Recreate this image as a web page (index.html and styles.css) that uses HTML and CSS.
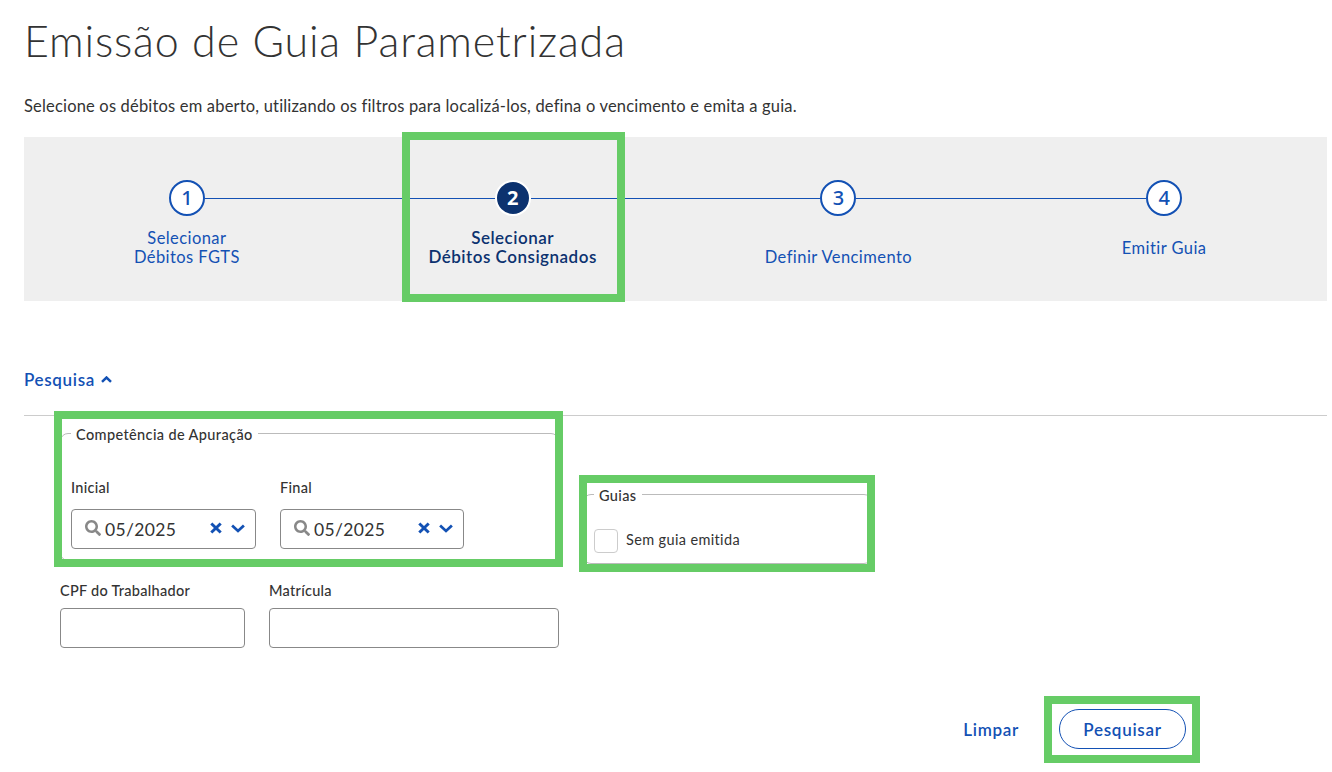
FILE: index.html
```html
<!DOCTYPE html>
<html lang="pt-BR">
<head>
<meta charset="utf-8">
<title>Emissão de Guia Parametrizada</title>
<link rel="stylesheet" href="styles.css">
</head>
<body>
<svg class="sprite" aria-hidden="true">
  <symbol id="search" viewBox="0 0 512 512"><path d="M505 442.700 405.300 343c-4.500-4.500-10.600-7-17-7H372c27.600-35.300 44-79.700 44-128C416 93.100 322.900 0 208 0S0 93.100 0 208s93.100 208 208 208c48.300 0 92.700-16.400 128-44v16.300c0 6.400 2.500 12.500 7 17l99.700 99.700c9.400 9.400 24.600 9.400 33.900 0l28.300-28.300c9.400-9.400 9.400-24.600.1-34zM208 336c-70.700 0-128-57.200-128-128 0-70.700 57.200-128 128-128 70.700 0 128 57.200 128 128 0 70.700-57.200 128-128 128z"/></symbol>
  <symbol id="times" viewBox="0 0 12 12"><path d="M1.300 1.500l9.400 9M10.700 1.500l-9.400 9" fill="none" stroke="currentColor" stroke-width="3"/></symbol>
  <symbol id="chevron" viewBox="0 0 14 9"><path d="M1.100 1.400L7 7l5.900-5.600" fill="none" stroke="currentColor" stroke-width="2.700"/></symbol>
</svg>
<main class="page">
  <h1 class="title">Emissão de Guia Parametrizada</h1>
  <p class="intro">Selecione os débitos em aberto, utilizando os filtros para localizá-los, defina o vencimento e emita a guia.</p>

  <ol class="stepper">
    <li class="step"><span class="num">1</span><span class="step-label">Selecionar<br>Débitos FGTS</span></li>
    <li class="step active"><span class="num">2</span><span class="step-label">Selecionar<br>Débitos Consignados</span><i class="mark mark-step"></i></li>
    <li class="step"><span class="num">3</span><span class="step-label"><br>Definir Vencimento</span></li>
    <li class="step"><span class="num">4</span><span class="step-label middle">Emitir Guia</span></li>
  </ol>

  <button class="toggle"><span>Pesquisa</span><svg class="caret" viewBox="0 0 11 7"><path d="M1 5.800L5.500 1.500 10 5.800" fill="none" stroke="currentColor" stroke-width="2.500"/></svg></button>

  <form class="search">
    <div class="filters">
      <fieldset class="group period">
        <legend>Competência de Apuração</legend>
        <div class="selects">
          <div class="field"><label>Inicial</label>
            <div class="box select"><svg class="lens"><use href="#search"/></svg><span class="value">05/2025</span><svg class="clear"><use href="#times"/></svg><svg class="down"><use href="#chevron"/></svg></div></div>
          <div class="field end"><label>Final</label>
            <div class="box select"><svg class="lens"><use href="#search"/></svg><span class="value">05/2025</span><svg class="clear"><use href="#times"/></svg><svg class="down"><use href="#chevron"/></svg></div></div>
        </div>
        <i class="mark mark-period"></i>
      </fieldset>
      <fieldset class="group guides">
        <legend>Guias</legend>
        <div class="check"><span class="tick"></span><span class="check-label">Sem guia emitida</span></div>
        <i class="mark mark-guides"></i>
      </fieldset>
    </div>
    <div class="inputs">
      <div class="field"><label>CPF do Trabalhador</label><div class="box"></div></div>
      <div class="field reg"><label>Matrícula</label><div class="box"></div></div>
    </div>
    <div class="actions">
      <span class="reset">Limpar</span>
      <span class="submit"><span>Pesquisar</span><i class="mark mark-submit"></i></span>
    </div>
  </form>
</main>
</body>
</html>
```
FILE: styles.css
```css
* { box-sizing: border-box; }
body { margin: 0; background: #fff; color: #333; font-family: Lato, "Open Sans", sans-serif; font-size: 14px; line-height: 20px; font-variant-ligatures: none; }
.sprite { display: none; }
svg { display: block; flex: none; }
.page { min-height: 772px; padding: 16px 5px 0 24px; }
.title { margin: 0; font-size: 43px; font-weight: 300; line-height: 50px; letter-spacing: 0.84px; white-space: nowrap; }
.intro { margin: 30px 0 21px; font-size: 16.5px; line-height: 20px; letter-spacing: 0.18px; white-space: nowrap; }

.stepper { display: grid; grid-template-columns: repeat(4, 1fr); height: 164px; margin: 0; padding: 43px 0 0; list-style: none; background: #efefef; }
.step { position: relative; display: flex; flex-direction: column; align-items: center; gap: 13px; color: #1351b4; }
.step + .step::before { content: ""; position: absolute; top: 18px; right: calc(50% + 18px); width: calc(100% - 36px); height: 1px; background: #1351b4; }
.num { display: flex; align-items: center; justify-content: center; width: 36px; height: 36px; border: 2px solid #1351b4; border-radius: 50%; background: #fff; font: 500 20px/32px "Noto Sans", sans-serif; }
.active { gap: 12px; color: #0c326f; }
.active .num { border-color: #fff; background: #0c326f; color: #fff; font-weight: 700; }
.step-label { display: block; min-height: 38px; font-size: 16.5px; line-height: 19px; letter-spacing: 0.43px; text-align: center; white-space: nowrap; }
.active .step-label { font-size: 17px; font-weight: 600; letter-spacing: 0.5px; }
.middle { padding-top: 10px; }

.toggle { display: flex; align-items: center; gap: 6px; width: 100%; height: 115px; padding: 44px 0 0; border: 0; border-bottom: 1px solid #ccc; background: none; color: #1351b4; font: 600 17px/20px Lato, sans-serif; letter-spacing: 0.65px; }
.caret { width: 11px; height: 7px; margin-bottom: 2px; }

.search { padding-left: 36px; }
.filters { display: flex; align-items: flex-start; gap: 24px; padding-top: 8px; }
.group { position: relative; min-width: 0; margin: 0; border: 1px solid #bbb; border-radius: 8px; }
.group legend { height: 18px; padding: 1px 5px 0; font-size: 14.5px; font-weight: 500; letter-spacing: 0.38px; white-space: nowrap; }
.period { width: 499px; height: 137px; padding: 36px 0 0 10px; }
.guides { width: 289px; height: 79px; margin-top: 61px; padding: 26px 0 0 10px; }
.selects, .inputs { display: flex; gap: 24px; }
.field { display: flex; flex-direction: column; width: 185px; gap: 7px; font-size: 14.5px; font-weight: 500; letter-spacing: 0.28px; }
.selects .field { gap: 11px; }
.selects .end { width: 184px; }
.inputs .reg { width: 290px; }
.box { height: 40px; border: 1px solid #888; border-radius: 4px; background: #fff; }
.select { display: flex; align-items: center; padding: 0 10px 0 13px; }
.lens { width: 16px; height: 16px; margin-bottom: 3px; fill: #888; }
.value { flex: 1; margin-left: 4px; padding-top: 2px; font-size: 17.5px; font-weight: 400; letter-spacing: 0.35px; }
.clear { width: 12px; height: 12px; margin-right: 9px; margin-bottom: 2px; color: #1351b4; }
.down { width: 14px; height: 9px; margin-bottom: 1px; color: #1351b4; }
.check { display: flex; gap: 8px; }
.tick { width: 24px; height: 24px; border: 1px solid #ccc; border-radius: 4px; }
.check-label { font-size: 14.5px; line-height: 22px; letter-spacing: 0.36px; }
.inputs { margin-top: 17px; }
.inputs label { height: 20px; line-height: 19px; }
.actions { display: flex; align-items: center; justify-content: flex-end; gap: 40px; margin-top: 61px; padding-right: 141px; color: #1351b4; font-size: 17px; font-weight: 600; letter-spacing: 0.7px; }
.reset, .submit { padding-top: 2px; }
.submit { position: relative; display: flex; align-items: center; justify-content: center; width: 127px; height: 40px; border: 1px solid #1351b4; border-radius: 20px; }

/* Green highlight frames laid over the content */
.mark { position: absolute; z-index: 1; border: 8px solid #66cc66; pointer-events: none; }
.mark-step { top: -48px; left: 52px; width: 223px; height: 170px; }
.mark-period { top: -31px; left: -7px; width: 509px; height: 156px; }
.mark-guides { top: -28px; left: -5px; width: 296px; height: 97px; }
.mark-submit { top: -14px; left: -16px; width: 156px; height: 67px; }
```
